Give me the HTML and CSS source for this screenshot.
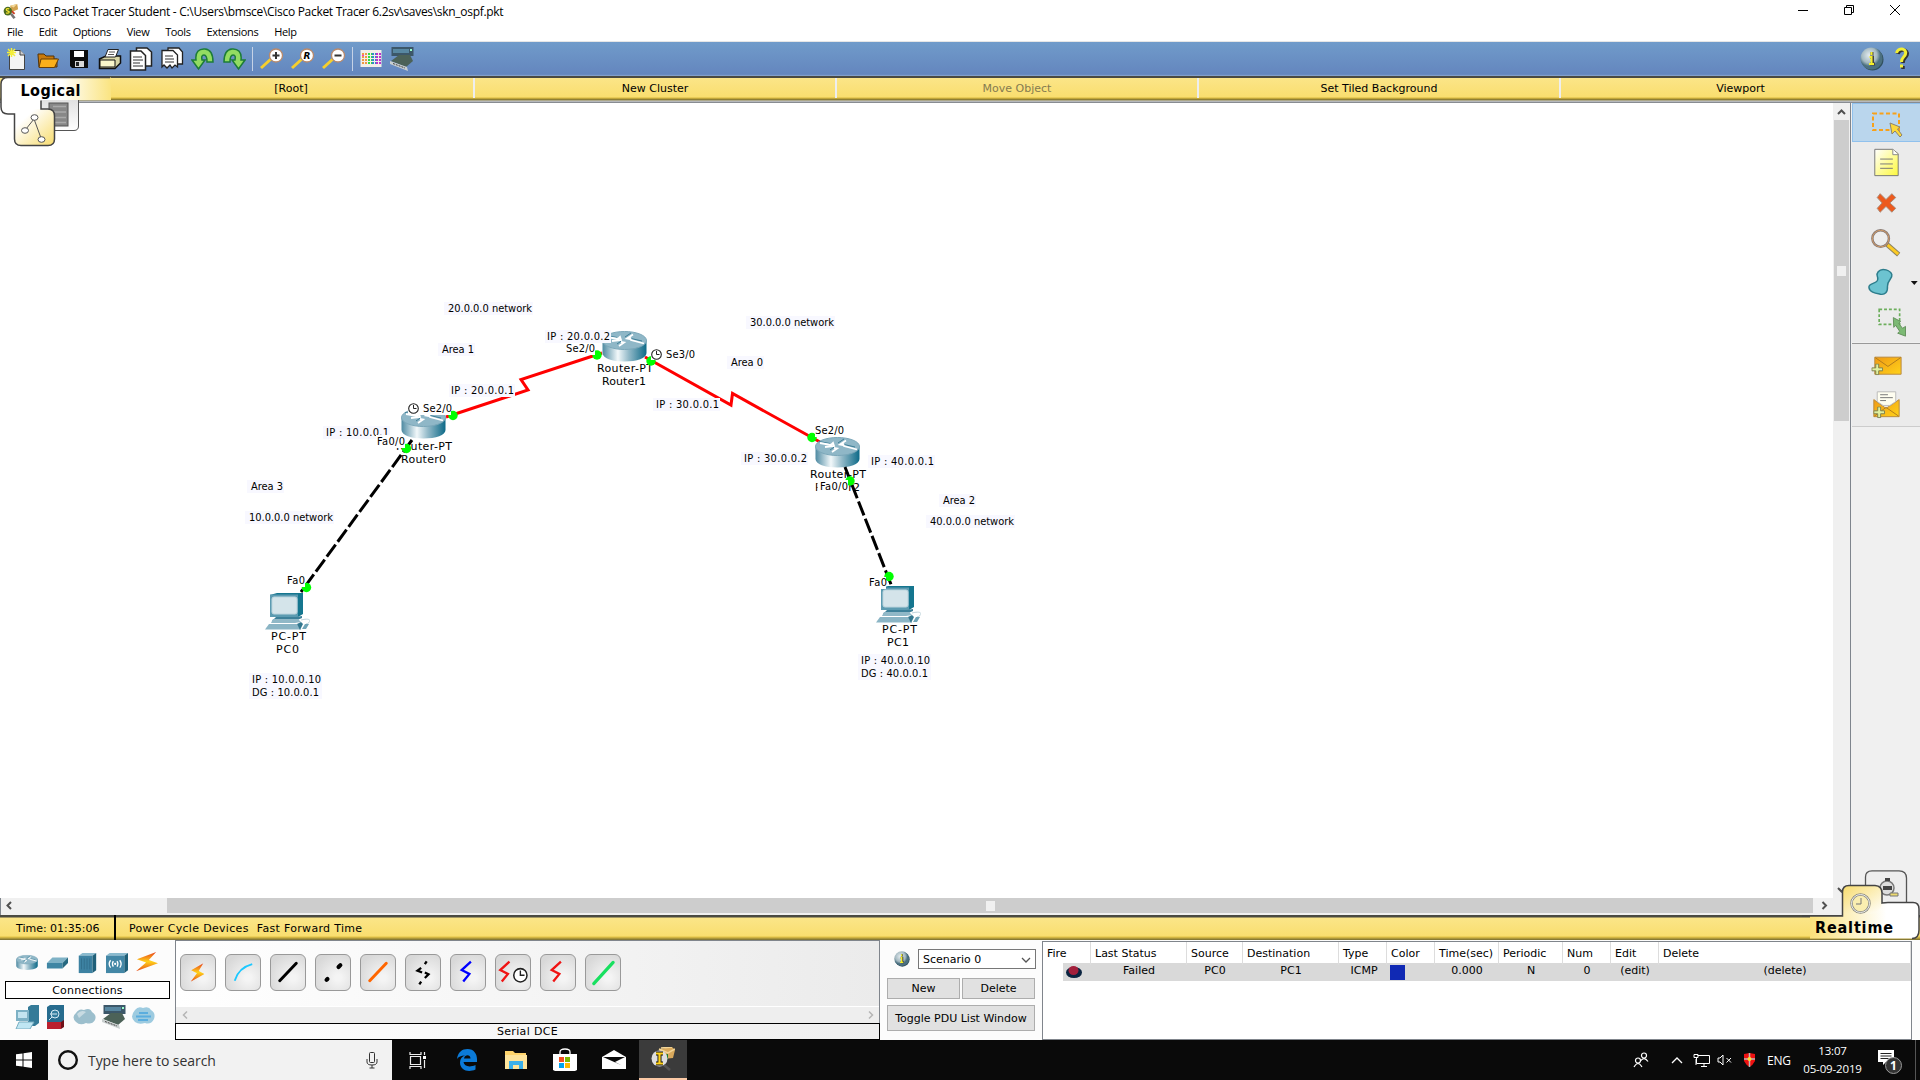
FILE: index.html
```html
<!DOCTYPE html>
<html lang="en">
<head>
<meta charset="utf-8">
<title>Cisco Packet Tracer Student</title>
<link rel="stylesheet" href="styles.css">
</head>
<body>
<svg class="defs" width="0" height="0" aria-hidden="true">
  <defs>
    <linearGradient id="metal"><stop offset="0" stop-color="#4e8aa2"/><stop offset=".35" stop-color="#f2f8fa"/><stop offset=".6" stop-color="#92b9c8"/><stop offset="1" stop-color="#0d6a88"/></linearGradient>
    <linearGradient id="hot" x1="0" y1="0" x2="0" y2="1"><stop offset="0" stop-color="#e8401c"/><stop offset=".5" stop-color="#ffd21a"/><stop offset="1" stop-color="#e84a18"/></linearGradient>
    <linearGradient id="env" x1="0" y1="0" x2="1" y2="1"><stop offset="0" stop-color="#f09a14"/><stop offset="1" stop-color="#ffd21a"/></linearGradient>
    <linearGradient id="note" x1="0" y1="0" x2="1" y2="1"><stop offset="0" stop-color="#fff"/><stop offset="1" stop-color="#fdf93c"/></linearGradient>
    <radialGradient id="orb" cx=".4" cy=".35"><stop offset="0" stop-color="#e4ecf0"/><stop offset=".7" stop-color="#a3b8c0"/><stop offset="1" stop-color="#4b7080"/></radialGradient>
    <linearGradient id="tabfade"><stop offset="0" stop-color="#fff"/><stop offset=".55" stop-color="#fff"/><stop offset="1" stop-color="#fae481"/></linearGradient>
    <linearGradient id="rtfade"><stop offset="0" stop-color="#fae17a"/><stop offset=".7" stop-color="#fff"/></linearGradient>
    <linearGradient id="iconfade" x1="0" y1="0" x2="1" y2="1"><stop offset=".25" stop-color="#fff"/><stop offset="1" stop-color="#f8dc6c"/></linearGradient>
    <linearGradient id="clockfade" x1="0" y1="0" x2="1" y2="1"><stop offset="0" stop-color="#f8dc6c"/><stop offset="1" stop-color="#fff"/></linearGradient>
    <linearGradient id="greyfade" x1="0" y1="0" x2="0" y2="1"><stop offset="0" stop-color="#ddd"/><stop offset="1" stop-color="#fff"/></linearGradient>
    <symbol id="router" viewBox="0 0 45 31">
      <path d="M.5 9V22C.5 27 10 30.500 22.500 30.500S44.500 27 44.500 22V9Z" fill="url(#metal)"/>
      <ellipse cx="22.500" cy="9.500" rx="22" ry="9" fill="#8fb7c7" stroke="#7ba7b9"/>
      <path d="M4 4.500 15 6.500M29 2 23 6M40 10 27 7M15 13 20 9.500" fill="none" stroke="#3e7f98"/>
      <path d="M5 6 16 8 18 6 19 9 10 10M31 3.500 25 7.500 28 8M42 12.500 29 9 28 6.500M17 15 22 11.500 19 11" fill="none" stroke="#fff" stroke-width="1.800"/>
    </symbol>
    <symbol id="pc" viewBox="0 0 45 37">
      <path d="M5 2 12 0H38V21L33 24H5Z" fill="#15768f"/>
      <path d="M5 1.500H33V24H5Z" fill="#5c9bb1"/>
      <rect x="7" y="4" width="25" height="17" rx="2" fill="#d4e4ea" stroke="#bcd5de"/>
      <path d="M11 24H31L37 23V25L30 28H7Z" fill="#3d8099"/>
      <path d="M8 26H33L36 29 30 30H6Z" fill="#90b8c7"/>
      <path d="M4 31H32L36 36.500H0Z" fill="#8bb5c5"/><path d="M32 31 36 29 38 31 35 37Z" fill="#34788f"/>
      <path d="M36 27C48 24 46 30 41 31" fill="none" stroke="#bdd2da"/><path d="M40 31h4l-3 5h-4Z" fill="#6fa4b7"/>
    </symbol>
    <symbol id="clk" viewBox="0 0 12 12"><circle cx="6" cy="6" r="4.800" fill="#fff" stroke="#222" stroke-width="1.100"/><path d="M6 2.500V6H9" fill="none" stroke="#222"/></symbol>
    <symbol id="bolt" viewBox="0 0 24 30"><path d="M17 2 5 13 15 18 7 28" fill="none" stroke="currentColor" stroke-width="3"/></symbol>
    <symbol id="hotbolt" viewBox="0 0 24 24" preserveAspectRatio="none"><path d="M22 0 1 9 11 13 0 24 24 14 14 10Z" fill="url(#hot)"/></symbol>
    <symbol id="lens" viewBox="0 0 24 24"><path d="M1 21 11 12" stroke="#f6cf2d" stroke-width="3"/><circle cx="16" cy="8.500" r="6.500" fill="#fff" stroke="#b98a6c" stroke-width="1.300"/></symbol>
    <symbol id="device" viewBox="0 0 24 24"><rect x="1.500" width="22" height="9" fill="#3c5769"/><path d="M3 2H19V6H3Z" fill="#5887a1"/><path d="M20 2h2v2h-2z" fill="#9fc"/><path d="M9 8H20L23 14 16 20 1 14Z" fill="#4c6258"/><path d="M0 14 17 20 18 24 0 17Z" fill="#c9cfcf"/><path d="M3 16.500l12 4.500" stroke="#444" stroke-dasharray="2 1"/></symbol>
    <symbol id="info" viewBox="0 0 24 24"><circle cx="12.500" cy="12.500" r="11" fill="#31505e"/><circle cx="11.500" cy="11.500" r="11" fill="url(#orb)"/><path d="M12 5v3M10 10h2.500v7M10 17h5" stroke="#444" stroke-width="3" fill="none"/><path d="M11.500 5v3M9.500 10h2v7M9 17h5" stroke="#f4f02a" stroke-width="2" fill="none"/></symbol>
    <symbol id="pt" viewBox="0 0 18 18"><path d="M8 2 16 0 17 6 10 9Z" fill="#d2a24e"/><path d="M8 2l8-2-4 4z" fill="#f2d898"/><circle cx="5.500" cy="8" r="4.800" fill="#4e6d20"/><path d="M7 5.500C3 4 3 7.500 5.500 8S7 11 3.500 10" fill="none" stroke="#f6e330" stroke-width="1.500"/><path d="M9 11 13 16" stroke="#777" stroke-width="3"/><path d="M10 8l3 3" stroke="#c83a22" stroke-width="2"/></symbol>
    <symbol id="plus" viewBox="0 0 12 12"><path d="M4.500.5h3v4h4v3h-4v4h-3v-4h-4v-3h4Z" fill="#dff0a0" stroke="#7d8150"/></symbol>
  </defs>
</svg>

<header class="titlebar">
  <svg class="app-icon" width="16" height="16"><use href="#pt"/></svg>
  <span class="title">Cisco Packet Tracer Student - C:\Users\bmsce\Cisco Packet Tracer 6.2sv\saves\skn_ospf.pkt</span>
  <div class="window-buttons">
    <svg width="12" height="12"><path d="M1 6.500h10" stroke="#000"/></svg>
    <svg width="12" height="12"><path d="M1.500 3.500h7v7h-7zM3.500 3.500v-2h7v7h-2" fill="none" stroke="#000"/></svg>
    <svg width="12" height="12"><path d="M1 1l10 10M11 1 1 11" stroke="#000"/></svg>
  </div>
</header>
<nav class="menu"><span>File</span><span>Edit</span><span>Options</span><span>View</span><span>Tools</span><span>Extensions</span><span>Help</span></nav>

<div class="toolbar">
  <div class="tools">
    <svg viewBox="0 0 24 24"><path d="M4.500 3.500H15L19.500 8V22.500H4.500Z" fill="#f4f4f4" stroke="#444"/><path d="M15 3v5h5" fill="#ccc" stroke="#444"/><path d="M3 2l7 7M10 2 3 9M6.500 1v9M2 5.500h9" stroke="#f4ee3a" stroke-width="1.500"/></svg>
    <svg viewBox="0 0 24 24"><path d="M2 8V7H8L10 9H18V12H21V20H3Z" fill="#c97a0c" stroke="#533308"/><path d="M5 12H22.500L18.500 20.500H3Z" fill="#fbb01c" stroke="#694008"/></svg>
    <svg viewBox="0 0 24 24"><path d="M3 3H21V21H5L3 19Z" fill="#0c0c0c"/><path d="M7 4H17V10H7Z" fill="#fff"/><path d="M8 14H17V20H8Z" fill="#d8d8d8"/><path d="M9 15h3v4H9Z" fill="#222"/></svg>
    <svg viewBox="0 0 24 24"><path d="M1.500 12 8 9H22.500V16L17 21.500H1.500Z" fill="#d8d6a6" stroke="#111" stroke-width="1.500"/><path d="M7 10 10 2.500H20.500L17.500 10Z" fill="#fff" stroke="#222"/><path d="M11 5h6M10 7.500h6" stroke="#555"/><path d="M2 13H17V20H2Z" fill="#f8f6cc" stroke="#111"/></svg>
    <svg viewBox="0 0 24 24"><g fill="#fff" stroke="#222" stroke-width="1.500"><path d="M7.500 1H18L22.500 5V19H7.500Z"/><path d="M1.500 4H12L16.500 8.500V23H1.500Z"/></g><path d="M4 10h9M4 13h10M4 16h7M4 19h10" stroke="#333"/></svg>
    <svg viewBox="0 0 24 24"><g fill="#fff" stroke="#222" stroke-width="1.300"><path d="M8 1H19L22.500 5V17H8Z"/><path d="M2 3.500H13L17.500 8V20L15 18 12 21 10 18 7 21 4 18 2 20Z"/></g><path d="M5 9h8M5 12h9M5 15h9" stroke="#333"/></svg>
    <svg viewBox="0 0 24 24"><path d="M1 13H5C4 5 8 1.500 14 2S22 7 22 15H16C16 10 15.500 8 13 8S10.500 10 11 13H14L7.500 22Z" fill="#92dc62" stroke="#1c7c38" stroke-width="1.500"/></svg>
    <svg viewBox="0 0 24 24"><path d="M23 13H19C20 5 16 1.500 10 2S2 7 2 15H8C8 10 8.500 8 11 8S13.500 10 13 13H10L16.500 22Z" fill="#92dc62" stroke="#1c7c38" stroke-width="1.500"/></svg>
    <i class="sep"></i>
    <svg viewBox="0 0 24 24"><use href="#lens"/><path d="M12.500 8.500h7M16 5v7" stroke="#333" stroke-width="2"/></svg>
    <svg viewBox="0 0 24 24"><use href="#lens"/><text x="12.500" y="12" class="lens-r">R</text></svg>
    <svg viewBox="0 0 24 24"><use href="#lens"/><path d="M12.500 8.500h7" stroke="#333" stroke-width="2"/></svg>
    <i class="sep"></i>
    <svg viewBox="0 0 24 24"><rect x="1.500" y="3" width="21" height="17" fill="#f2efe8"/><g stroke-width="2" stroke-dasharray="2 1"><path d="M3 8h3" stroke="#f3c"/><path d="M3 7h5M3 10h5M3 13h5M3 16h5" stroke="#e94"/><path d="M9 7h4M9 10h4M9 13h4M9 16h4" stroke="#3d4"/><path d="M13 7h4M13 10h4M13 13h4M13 16h4" stroke="#38c"/><path d="M17 7h5M17 10h5M17 13h5M17 16h5" stroke="#b3c"/></g></svg>
    <svg viewBox="0 0 24 24"><use href="#device"/></svg>
  </div>
  <div class="help-tools">
    <svg width="24" height="24"><use href="#info"/></svg>
    <svg width="24" height="24" viewBox="0 0 24 24"><path d="M8 7C9 1 19 2 17 8 16 11 13 11 13 16M13 19v3" fill="none" stroke="#333" stroke-width="3.500"/><path d="M6.500 6C8 0 17 1 15.500 7 15 10 11.500 10 11.500 15M11.500 17.500v3" fill="none" stroke="#f1ee35" stroke-width="3"/></svg>
  </div>
</div>

<div class="navbar">
  <span>[Root]</span><span>New Cluster</span><span class="off">Move Object</span><span>Set Tiled Background</span><span>Viewport</span>
  <svg class="logical" width="112" height="72" viewBox="0 0 112 72">
    <path d="M40.500 20H78.500V50Q78.500 54.500 74 54.500H40.500Z" fill="url(#greyfade)" stroke="#555"/>
    <rect x="49" y="27" width="19" height="23" fill="#888" stroke="#555"/><path d="M53 30.500H66M53 36H66M53 41.500H66M53 46.500H66" stroke="#aaa" stroke-width="1.500"/>
    <path d="M0 1.500H111V24H41V33H15V38H8Q1 38 1 31V8Q1 1.500 8 1.500Z" fill="url(#tabfade)"/>
    <path d="M15 33H41V33.500H48Q54.500 33.500 54.500 40V63Q54.500 69.500 48 69.500H21Q14.500 69.500 14.500 63V38Z" fill="url(#iconfade)"/>
    <path d="M110 1.500H8Q1 1.500 1 8V31Q1 38 8 38H14.500V63Q14.500 69.500 21 69.500H48Q54.500 69.500 54.500 63V40Q54.500 33 48 33H41V24.500" fill="none" stroke="#444" stroke-width="1.500"/>
    <path d="M26 53 34 43 41 62" fill="none" stroke="#555"/><g fill="#fff" stroke="#555"><ellipse cx="34.500" cy="41.500" rx="3.500" ry="2.800"/><ellipse cx="25" cy="54.500" rx="3.500" ry="2.800"/><ellipse cx="41.500" cy="63.500" rx="3.500" ry="2.800"/></g>
    <text x="20.500" y="20" class="tab-name" textLength="60">Logical</text>
  </svg>
</div>

<main class="work">
  <section class="stage">
    <svg class="diagram" viewBox="0 103 1833 795" width="1833" height="795">
      <g fill="none" stroke="#f00" stroke-width="3">
        <path d="M446 417 528 390 521 379.500 602 353"/><path d="M645 357 731 405 732.500 393.500 820 442"/>
      </g>
      <g class="notes-bg">
        <path d="M444 302h89v13h-89zM438 343h37v13h-37zM449 384h66v13h-66zM323 426h67v13h-67zM746 316h89v13h-89zM727 356h37v13h-37zM653 398h67v13h-67zM741 452h67v13h-67zM868 455h67v13h-67zM939 494h37v13h-37zM926 515h89v13h-89zM858 654h73v26h-73zM247 480h37v13h-37zM245 511h89v13h-89zM249 673h73v26h-73z"/>
      </g>
      <use href="#router" x="602" y="331" width="45" height="31"/>
      <use href="#router" x="401" y="408" width="45" height="31"/>
      <use href="#router" x="815" y="437" width="45" height="31"/>
      <path d="M545 330h66v13h-66z" fill="#f8f8ff"/>
      <g class="names">
        <text x="597" y="372" textLength="56">Router-PT</text><text x="602" y="385" textLength="44">Router1</text>
        <text x="396" y="450" textLength="56">Router-PT</text><text x="401" y="463" textLength="45">Router0</text>
        <text x="810" y="478" textLength="56">Router-PT</text><text x="815" y="491" textLength="45">Router2</text>
        <text x="882" y="633" textLength="35">PC-PT</text><text x="887" y="646" textLength="22">PC1</text>
        <text x="271" y="640" textLength="35">PC-PT</text><text x="276" y="653" textLength="23">PC0</text>
      </g>
      <g class="notes">
        <text x="448" y="312" textLength="84">20.0.0.0 network</text><text x="442" y="353" textLength="32">Area 1</text>
        <text x="547" y="340" textLength="63">IP : 20.0.0.2</text><text x="451" y="394" textLength="63">IP : 20.0.0.1</text>
        <text x="326" y="436" textLength="63">IP : 10.0.0.1</text><text x="750" y="326" textLength="84">30.0.0.0 network</text>
        <text x="731" y="366" textLength="32">Area 0</text><text x="656" y="408" textLength="63">IP : 30.0.0.1</text>
        <text x="744" y="462" textLength="63">IP : 30.0.0.2</text><text x="871" y="465" textLength="63">IP : 40.0.0.1</text>
        <text x="943" y="504" textLength="32">Area 2</text><text x="930" y="525" textLength="84">40.0.0.0 network</text>
        <text x="861" y="664" textLength="69">IP : 40.0.0.10</text><text x="861" y="677" textLength="67">DG : 40.0.0.1</text>
        <text x="251" y="490" textLength="32">Area 3</text><text x="249" y="521" textLength="84">10.0.0.0 network</text>
        <text x="252" y="683" textLength="69">IP : 10.0.0.10</text><text x="252" y="696" textLength="67">DG : 10.0.0.1</text>
      </g>
      <path d="M412 440 301 592M845 467 892 587" fill="none" stroke="#000" stroke-width="3" stroke-dasharray="15 3.500"/>
      <use href="#pc" x="265" y="593" width="45" height="37"/><use href="#pc" x="876" y="586" width="45" height="37"/>
      <g fill="#0f0"><circle cx="453" cy="415.500" r="4.700"/><circle cx="597" cy="355" r="4.700"/><circle cx="651" cy="361" r="4.700"/><circle cx="812" cy="437.500" r="4.700"/><circle cx="406.500" cy="448.500" r="4.700"/><circle cx="306.500" cy="587.500" r="4.700"/><circle cx="850" cy="481" r="4.700"/><circle cx="889" cy="576.500" r="4.700"/></g>
      <path d="M565 343h30v12h-30zM408 403h43v12h-43zM376 435h29v13h-29zM651 348h43v12h-43zM815 425h29v12h-29zM817.500 480h30.500v13h-30.500zM868 577h18v12h-18zM286 575h19v12h-19z" fill="#fff"/>
      <g class="notes">
        <text x="566" y="352" textLength="29">Se2/0</text><text x="423" y="412" textLength="29">Se2/0</text><text x="377" y="445" textLength="28">Fa0/0</text>
        <text x="666" y="358" textLength="29">Se3/0</text><text x="815" y="434" textLength="29">Se2/0</text><text x="820" y="490" textLength="28">Fa0/0</text>
        <text x="869" y="586" textLength="18">Fa0</text><text x="287" y="584" textLength="18">Fa0</text>
      </g>
      <use href="#clk" x="407.500" y="402.500" width="12" height="12"/><use href="#clk" x="650.500" y="348.500" width="12" height="12"/>
    </svg>
    <div class="vscroll">
      <svg width="16" height="17"><path d="M4 11 7.500 7.500 11 11" fill="none" stroke="#505050" stroke-width="2"/></svg>
      <div class="vthumb"><i></i></div>
      <svg class="down" width="16" height="17"><path d="M4 7 7.500 10.500 11 7" fill="none" stroke="#505050" stroke-width="2"/></svg>
    </div>
    <div class="hscroll">
      <svg width="16" height="16"><path d="M10 4 6.500 7.500 10 11" fill="none" stroke="#505050" stroke-width="2"/></svg>
      <div class="hthumb"><i></i></div>
      <svg width="21" height="16"><path d="M9.500 4 13 7.500 9.500 11" fill="none" stroke="#505050" stroke-width="2"/></svg>
    </div>
  </section>
  <aside class="side">
    <div class="tool on"><svg viewBox="0 0 68 39"><path d="M21 10.500H47V27H21Z" fill="none" stroke="#f7a11a" stroke-width="2" stroke-dasharray="4 2.500"/><path d="M38 20 48 24 45.500 26 50 32 48 34 43 28 40 31Z" fill="#fbd83a" stroke="#8b8370"/></svg></div>
    <div class="tool"><svg viewBox="0 0 68 40"><path d="M22.500 7.500H41L46.500 12V34.500H22.500Z" fill="url(#note)" stroke="#777"/><path d="M41 7.500V13H46.500" fill="#fff" stroke="#888"/><path d="M28 17.500H41M28 22.500H41M28 27H41" stroke="#777"/></svg></div>
    <div class="tool"><svg viewBox="0 0 68 40"><path d="M28 12 34 18 40 12 44 16 38 21.500 44 27 40 31 34 25 28 31 25 27 30 21.500 25 16Z" fill="#ec5a1e" stroke="#a98b78"/></svg></div>
    <div class="tool"><svg viewBox="0 0 68 40"><path d="M35 23 47 33.500" stroke="#8b8260" stroke-width="5"/><path d="M35.500 23.500 46.500 33" stroke="#fcca22" stroke-width="3"/><circle cx="28.500" cy="17" r="8.500" fill="#efefef" fill-opacity=".6" stroke="#877a75" stroke-width="2.500"/><circle cx="28.500" cy="17" r="8.500" fill="none" stroke="#d29a66"/></svg></div>
    <div class="tool"><svg viewBox="0 0 68 40"><path d="M26 10C30 5 39 9 40 13S35 19 35.500 25 33 34 28 33 17 31 16.500 26 25 23 25.500 18 23 14 26 10Z" fill="#6cc3d0" stroke="#2d7d8c" stroke-width="1.500"/><path d="M59.500 19.500h7l-3.500 4z" fill="#111"/></svg></div>
    <div class="tool"><svg viewBox="0 0 68 40"><path d="M27 7.500H48V23H27Z" fill="none" stroke="#6cae5c" stroke-width="1.700" stroke-dasharray="3 2"/><path d="M41.500 16 49 20 47 22 51 27 54 25V35L46 32 48 30 44 24 42 26Z" fill="#7cba74" stroke="#66915f"/></svg></div>
    <div class="tool split"><svg viewBox="0 0 68 40"><path d="M22.500 13.500H49.500V31H22.500Z" fill="url(#env)" stroke="#b98a40"/><path d="M23 14 36 23 49 14" fill="none" stroke="#b17b1c"/><use href="#plus" x="19" y="20" width="12" height="12"/></svg></div>
    <div class="tool"><svg viewBox="0 0 68 40"><path d="M21.500 16 34 25 47.500 16V33.500H21.500Z" fill="url(#env)" stroke="#b98a40"/><path d="M25 8H44V18L38 22H31L25 18Z" fill="#fffef0" stroke="#bbb"/><path d="M28 11h8M28 14h13M28 17h6" stroke="#777"/><path d="M22 33 34 24 47 33" fill="none" stroke="#b17b1c"/><use href="#plus" x="21" y="23" width="12" height="12"/></svg></div>
  </aside>
</main>

<div class="timebar">
  <span class="time">Time: 01:35:06</span><span class="links"><span class="power">Power Cycle Devices</span><span class="fast">Fast Forward Time</span></span>
  <svg class="realtime" width="118" height="70" viewBox="1802 870 118 70">
    <path d="M1865.500 905V877Q1865.500 870.800 1872 870.800H1899Q1906.500 871 1906.500 878V905Z" fill="#eee" stroke="#555" stroke-width="1.300"/>
    <circle cx="1887" cy="888" r="7" fill="#ddd" stroke="#777" stroke-width="1.500"/><path d="M1885 878h5v3h-5zM1883 886h9v4h-9z" fill="#444"/><path d="M1890 893h8v3h-8z" fill="#eedb70" stroke="#777"/>
    <path d="M1810 916H1842.500V892Q1842.500 885.500 1849 885.500H1875Q1882 886 1882 893V903Q1885 902.500 1888 902.500H1913Q1919 902.500 1919 909V930Q1919 938.500 1912 938.500H1810Z" fill="url(#rtfade)"/>
    <path d="M1842.500 912V892Q1842.500 885.500 1849 885.500H1875Q1882 886 1882 893V904Q1880 912 1870 914H1842.500Z" fill="url(#clockfade)"/>
    <path d="M1802 916H1842.500V892Q1842.500 885.500 1849 885.500H1875Q1882 886 1882 893V903Q1885 902.500 1888 902.500H1913Q1919 902.500 1919 909V930Q1919 938.500 1912 938.500" fill="none" stroke="#444" stroke-width="1.500"/>
    <circle cx="1860.500" cy="903.500" r="9" fill="#faeeb0" stroke="#8c8c80" stroke-width="2.500"/><circle cx="1860.500" cy="903.500" r="9" fill="none" stroke="#eee"/><path d="M1861 898v6h-5" fill="none" stroke="#777"/>
    <text x="1815" y="932.500" class="tab-name" textLength="78">Realtime</text>
  </svg>
</div>

<section class="bottom">
  <div class="kinds">
    <div class="kind-row">
      <svg viewBox="0 0 24 24"><use href="#router" x="0" y="3" width="24" height="17"/></svg>
      <svg viewBox="0 0 24 24"><path d="M1 12 7 6H24L18 12Z" fill="#7fb2c6"/><path d="M1 12H18V18H1Z" fill="#3f86a4"/><path d="M18 12 24 6V12L18 18Z" fill="#256880"/></svg>
      <svg viewBox="0 0 24 24"><path d="M3 4 7 1H22L18 4Z" fill="#8abace"/><path d="M3 4H18V23H3Z" fill="#3d82a2"/><path d="M18 4 22 1V20L18 23Z" fill="#1f6079"/><path d="M6 7v12M9 7v12M12 7v12M15 7v12" stroke="#306f8c"/></svg>
      <svg viewBox="0 0 24 24"><path d="M0 4 4 1H24L20 4Z" fill="#8abace"/><path d="M0 4H20V23H0Z" fill="#4387a6"/><path d="M20 4 24 1V20L20 23Z" fill="#1f6079"/><path d="M5 9Q2 13 5 17M8 10Q6 13 8 16M12 10Q14 13 12 16M15 9Q18 13 15 17" fill="none" stroke="#fff" stroke-width="1.400"/><circle cx="10" cy="13" r="1.200" fill="#fff"/></svg>
      <svg viewBox="0 0 24 24"><use href="#hotbolt" width="24" height="21"/></svg>
    </div>
    <div class="kind-name">Connections</div>
    <div class="kind-row low">
      <svg viewBox="0 0 24 24"><path d="M13 2 16 0H24V18L20 21H13Z" fill="#347b98"/><path d="M1 5H14V16H1Z" fill="#7db1c5"/><path d="M3 7h9v6H3Z" fill="#c4e4f0"/><path d="M4 17H19L15 24H1Z" fill="#bfe6f3" stroke="#78adc0"/></svg>
      <svg viewBox="0 0 24 24"><path d="M3 2 6 0H20V20L17 23H3Z" fill="#276c8e"/><path d="M3 17H17V24H3Z" fill="#ba202e"/><path d="M17 17l3-2v7l-3 2z" fill="#701018"/><circle cx="11" cy="9" r="4" fill="#357d9d" stroke="#d7eaf2"/><path d="M8 12 5 15M6 9h7" stroke="#d7eaf2"/></svg>
      <svg viewBox="0 0 24 24"><path d="M3 8Q6 3 11 5 17 2 19 7 24 10 22 15 19 20 13 18 7 21 3 17-2 12 3 8" fill="#9cbfcd"/><path d="M4 9q4-5 9-2l-7 6z" fill="#c8dbe2"/></svg>
      <svg viewBox="0 0 24 24"><use href="#device"/></svg>
      <svg viewBox="0 0 24 24"><path d="M4 5Q7 1 12 3 18 1 20 5 25 8 23 14 20 20 14 18 8 20 4 17-2 12 4 5" fill="#9dcbe0"/><path d="M8 8H17M5 11.500H20M7 15H17" stroke="#5badde" stroke-width="1.800"/></svg>
    </div>
  </div>

  <div class="cables">
    <div class="cable-row">
      <div class="cable"><svg viewBox="0 0 36 38"><use href="#hotbolt" x="10" y="9" width="15" height="20"/></svg></div>
      <div class="cable"><svg viewBox="0 0 36 38"><path d="M9 28Q13 14 28 10" fill="none" stroke="#1cc8ff" stroke-width="2"/></svg></div>
      <div class="cable"><svg viewBox="0 0 36 38"><path d="M9 28 27 9" stroke="#000" stroke-width="3.200" stroke-linecap="round"/></svg></div>
      <div class="cable"><svg viewBox="0 0 36 38"><path d="M11 27 12 26M24 13 26 11" stroke="#000" stroke-width="4.500" stroke-linecap="round"/></svg></div>
      <div class="cable"><svg viewBox="0 0 36 38"><path d="M9 28 27 9" stroke="#f60" stroke-width="3.200" stroke-linecap="round"/></svg></div>
      <div class="cable"><svg viewBox="0 0 36 38"><path d="M22 7l-2 3M16 14l-4 3 5 2M20 19l4 2-4 4M16 29l-2 3" fill="none" stroke="#000" stroke-width="2.500"/></svg></div>
      <div class="cable blue"><svg viewBox="0 0 36 38"><use href="#bolt" x="7" y="4" width="20" height="28"/></svg></div>
      <div class="cable red"><svg viewBox="0 0 36 38"><use href="#bolt" x="0" y="4" width="20" height="28"/><use href="#clk" x="17" y="13" width="18" height="18"/></svg></div>
      <div class="cable red"><svg viewBox="0 0 36 38"><use href="#bolt" x="7" y="4" width="20" height="28"/></svg></div>
      <div class="cable"><svg viewBox="0 0 36 38"><path d="M8 31 29 8" stroke="#18e060" stroke-width="3.500" stroke-linecap="round"/></svg></div>
    </div>
    <div class="cable-scroll"><svg width="16" height="16"><path d="M11 4.500 7.500 8 11 11.500" fill="none" stroke="#b5b5b5" stroke-width="1.500"/></svg><svg width="16" height="16"><path d="M6 4.500 9.500 8 6 11.500" fill="none" stroke="#b5b5b5" stroke-width="1.500"/></svg></div>
    <div class="cable-name">Serial DCE</div>
  </div>

  <div class="scenario">
    <div class="pick"><svg width="16" height="16" viewBox="0 0 24 24"><use href="#info"/></svg><div class="combo"><span>Scenario 0</span><svg width="12" height="10"><path d="M2 3 6 7 10 3" fill="none" stroke="#555" stroke-width="1.300"/></svg></div></div>
    <div class="pair"><div class="btn">New</div><div class="btn">Delete</div></div>
    <div class="btn tall">Toggle PDU List Window</div>
  </div>

  <div class="pdu">
    <div class="cols head"><span>Fire</span><span>Last Status</span><span>Source</span><span>Destination</span><span>Type</span><span>Color</span><span>Time(sec)</span><span>Periodic</span><span>Num</span><span>Edit</span><span>Delete</span></div>
    <div class="cols row"><span class="fire"><svg width="16" height="14"><ellipse cx="8" cy="7.500" rx="8" ry="5.500" fill="#0b2440"/><ellipse cx="7.500" cy="5.500" rx="5" ry="4.500" fill="#a3203c"/></svg></span><span>Failed</span><span>PC0</span><span>PC1</span><span class="type">ICMP</span><span class="swatch"><i></i></span><span>0.000</span><span>N</span><span>0</span><span>(edit)</span><span>(delete)</span></div>
  </div>
</section>

<footer class="taskbar">
  <div class="start"><svg width="16" height="16"><path d="M0 2.300 6.500 1.400V7.500H0ZM7.500 1.200 16 0V7.500H7.500ZM0 8.500H6.500V14.600L0 13.700ZM7.500 8.500H16V16L7.500 14.800Z" fill="#fff"/></svg></div>
  <div class="search"><svg width="22" height="22"><circle cx="11" cy="11" r="8.800" fill="none" stroke="#111" stroke-width="2.400"/></svg><span>Type here to search</span><svg class="mic" width="12" height="18"><rect x="3.500" y="1.500" width="5" height="10" rx="1" fill="none" stroke="#333"/><path d="M1 8v3Q1 14 6 14T11 11V8M6 14v3M3.500 17h5" fill="none" stroke="#333"/></svg></div>
  <div class="apps">
    <div><svg width="18" height="18"><path d="M1.500 5.500h10v8h-10zM1 1v2.500h11V1M1 18v-2.500h11V18M15.500 1v3M15.500 9v8" fill="none" stroke="#eee" stroke-width="1.200"/><path d="M14 5h3v3h-3z" fill="#fff"/></svg></div>
    <div><svg width="20" height="22" viewBox="0 0 20 22"><path d="M0 10C1 3 5 0 10.500 0 17 0 20 5 20 10V13H6.500C7 17 12 19 18.500 16V20.500C11 24 3 21 3 13.500 3 10 5 7.500 8 6.500 4 6.500 1.500 8 0 10ZM7 9.500H13.500C13.500 5.500 8 5 7 9.500Z" fill="#0b7ad8"/></svg></div>
    <div><svg width="22" height="20"><path d="M0 1H8L10 3H21V19H0Z" fill="#ffd46b"/><path d="M0 5H22V19H0Z" fill="#fee49b"/><path d="M4 19V11H18V19H14V15H8V19Z" fill="#3bb0ea"/></svg></div>
    <div><svg width="24" height="24"><path d="M7 6V4Q7 1 12 1T17 4V6" fill="none" stroke="#fff" stroke-width="1.300"/><path d="M0 6H24V22L22 23H2L0 22Z" fill="#fff"/><path d="M6 9h5v5H6z" fill="#f25022"/><path d="M12 9h5v5h-5z" fill="#7fba00"/><path d="M6 15h5v5H6z" fill="#00a4ef"/><path d="M12 15h5v5h-5z" fill="#ffb900"/></svg></div>
    <div><svg width="24" height="20"><path d="M0 7 12 0 24 7V19H0Z" fill="#fff"/><path d="M1 7H23L13 12 20 15.500Z" fill="#0a0a0a"/></svg></div>
    <div class="current"><svg width="24" height="24"><path d="M8 2 21 0 24 3 22 11 12 12Z" fill="#d9a95c"/><path d="M8 2 17 6 24 2M10 1 21 0" fill="none" stroke="#f3d698" stroke-width="1.500"/><path d="M10 8l7-1v5l-3 3z" fill="#1e7a2c"/><circle cx="8.500" cy="11.500" r="8" fill="#dedede"/><path d="M13 18 19 23" stroke="#555" stroke-width="2.500"/><path d="M5 6.500h7M8.500 6.500v10M5 16.500h7" stroke="#111" stroke-width="4"/><path d="M5 6.500h7M8.500 6.500v10M5 16.500h7" stroke="#ffd21a" stroke-width="2.200"/></svg></div>
  </div>
  <div class="tray">
    <svg class="people" width="16" height="16"><g fill="none" stroke="#fff" stroke-width="1.200"><circle cx="11" cy="3.500" r="2.500"/><path d="M7.500 9Q11 4 15 9.500"/><circle cx="5" cy="8.500" r="2.500"/><path d="M1 15Q5 8 9 15"/></g></svg>
    <svg class="chev" width="12" height="8"><path d="M1 7 6 2 11 7" fill="none" stroke="#fff" stroke-width="1.300"/></svg>
    <svg class="net" width="17" height="14"><path d="M4.500 2.500H16.500V10.500H3.500V5M8 13.500h6M11 11v2M3 6v6M1 1.500h4v3H1z" fill="none" stroke="#fff"/></svg>
    <svg class="vol" width="15" height="14"><path d="M1 5h2l3-3v10L3 9H1zM9.500 5l4.500 4.500M14 5 9.500 9.500" fill="none" stroke="#fff"/></svg>
    <svg class="shield" width="11" height="14"><path d="M0 1 5.500 0 11 1V8Q9 12 5.500 14 2 12 0 8Z" fill="#e11"/><path d="M5.500 0V14M0 6H11" stroke="#bbb" stroke-width="1.500"/><circle cx="5.500" cy="6" r="2" fill="#fd3"/></svg>
    <span class="lang">ENG</span>
    <div class="clock"><span>13:07</span><span>05-09-2019</span></div>
    <svg class="action" width="26" height="26"><path d="M0 1H16V13H8L5 16V13H0Z" fill="#fff"/><path d="M2.500 4.500h11M2.500 7h11M2.500 9.500h8" stroke="#222"/><circle cx="15.500" cy="16.500" r="8" fill="#333" stroke="#999"/><text x="12" y="21" class="badge">1</text></svg>
    <i class="peek"></i>
  </div>
</footer>
</body>
</html>
```
FILE: styles.css
```css
* { box-sizing: border-box; }
body { margin: 0; width: 1920px; height: 1080px; overflow: hidden; display: flex; flex-direction: column; background: #fff; color: #000; font: 11px "DejaVu Sans", Verdana, sans-serif; white-space: nowrap; }
svg { display: block; flex: none; }
.defs { position: absolute; }

.titlebar { height: 23px; display: flex; align-items: center; padding-left: 3px; font: 12px "Open Sans", "Segoe UI", sans-serif; }
.title { letter-spacing: -.3px; }
.app-icon { margin-right: 4px; }
.window-buttons { margin-left: auto; display: flex; gap: 34px; padding: 0 19px 3px 0; }
.menu { height: 18px; display: flex; padding-left: 7px; gap: 15.800px; font: 11px/18px "Open Sans", "Segoe UI", sans-serif; letter-spacing: -.35px; }

.toolbar { height: 35px; border-top: 1px solid #e6e6e6; padding: 5px 6px 0 5px; background: linear-gradient(#709bca, #6486be 95%, #8fa9cf); display: flex; justify-content: space-between; }
.tools { display: flex; gap: 7px; }
.tools svg { width: 24px; height: 24px; }
.sep { width: 1px; height: 24px; background: #c5d2e6; margin: 0 -.500px 0 -1px; }
.lens-r { font: bold italic 9px "DejaVu Sans", sans-serif; }
.help-tools { display: flex; gap: 6px; }

.navbar { height: 27px; position: relative; z-index: 2; padding-left: 113px; display: grid; grid-template-columns: repeat(4, 362px) 1fr; background: linear-gradient(#4a4a42 2px, #fbe588 2px, #f9de6f 21px, #d9b93e 22px, #756b30 24px, #e5e5e5 25px, #888c92 26px); text-align: center; }
.navbar span { border-right: 2px solid #eee; height: 20px; margin-top: 2px; line-height: 21px; }
.navbar span:nth-of-type(1) { padding-right: 4px; }
.navbar span:nth-of-type(5) { border: 0; line-height: 22px; }
.navbar .off { color: #857b50; }
.logical { position: absolute; left: 0; top: 0; }
.tab-name { font: bold 16px "DejaVu Sans Condensed", Tahoma, sans-serif; }

.work { flex: none; height: 812px; display: flex; background: #f0f0f0; }
.stage { width: 1851px; display: grid; grid-template: 795px 17px / 1833px 16px; border-left: 1px solid #7f858d; border-right: 1px solid #7f858d; background: #f0f0f0; }
.diagram { background: #fff; margin-left: -1px; }
.names { font: 11px "DejaVu Sans", Verdana, sans-serif; }
.notes { font: 11px "DejaVu Sans Condensed", Tahoma, sans-serif; }
.notes-bg { fill: #f8f8ff; }
.vscroll { display: flex; flex-direction: column; }
.vthumb { height: 301px; width: 15px; background: #cdcdcd; display: grid; place-items: center; }
.vthumb i, .hthumb i { width: 9px; height: 10px; background: #f0f0f0; }
.down { margin-top: auto; }
.hscroll { grid-column: 1 / 3; height: 16px; display: flex; }
.hthumb { width: 1646px; height: 15px; margin: 0 0 0 150px; background: #cdcdcd; display: grid; place-items: center; }
.side { flex: 1; background: #f0f0f0; padding-left: 1px; }
.tool { height: 40px; background: #ebebeb; }
.tool svg { width: 68px; height: 39px; }
.tool.on { height: 39px; background: #bad6ed; border: 1px solid #90c1ed; border-right: 0; }
.tool.on svg { margin: -1px; }
.tool.split { border-top: 1px solid #999; height: 41px; margin-top: 1px; }
.tool:last-child { border-bottom: 1px solid #ccc; height: 43px; }

.timebar { height: 25px; position: relative; z-index: 2; display: flex; align-items: center; background: linear-gradient(#4a4a42 2px, #fbe588 3px, #f9de6f 21px, #e3c345 22px, #756b30 25px); line-height: 27px; }
.time { width: 116px; height: 25px; padding-left: 16px; border-right: 2px solid #000; }
.links { height: 25px; padding-left: 13px; display: flex; gap: 8px; letter-spacing: .320px; }
.realtime { position: absolute; right: 0; bottom: 0; }

.bottom { flex: none; height: 100px; display: flex; background: #fcfcfc; }
.kinds { width: 175px; padding: 12px 5px 0; }
.kind-row { display: flex; gap: 6px; padding-left: 10px; height: 29px; }
.kind-row svg { width: 24px; height: 22px; }
.kind-row.low { padding-top: 6px; gap: 5px; }
.kind-row.low svg { height: 24px; }
.kind-name { height: 18px; border: 1px solid #000; background: #fff; text-align: center; line-height: 17px; letter-spacing: .250px; }
.cables { width: 705px; border: 1px solid #80858c; border-bottom: 0; background: linear-gradient(90deg, #fff, #ebebeb); display: flex; flex-direction: column; }
.cable-row { height: 67px; padding: 13px 4px; display: flex; gap: 9px; }
.cable { width: 36px; height: 37px; border: 1px solid #999; border-radius: 6px; background: radial-gradient(circle at 65% 65%, #f4f4f4 10%, #d8d8d8 80%); }
.cable svg { width: 34px; height: 35px; }
.blue { color: #00f; }
.red { color: #f01414; }
.cable-scroll { height: 17px; border-top: 1px solid #fff; background: #eee; display: flex; justify-content: space-between; }
.cable-name { flex: 1; margin: 0 -1px; border: 1px solid #000; background: linear-gradient(90deg, #fff, #eee); text-align: center; line-height: 15px; letter-spacing: .350px; }
.scenario { width: 162px; padding: 9px 6px 0 7px; }
.pick { display: flex; align-items: center; gap: 8px; padding-left: 7px; height: 20px; }
.combo { flex: 1; height: 20px; line-height: 20px; border: 1px solid #777; background: #fff; display: flex; align-items: center; justify-content: space-between; padding: 1px 3px 0 4px; }
.pair { display: flex; gap: 2px; margin: 9px 0 6px; padding-right: 1px; }
.btn { flex: 1; height: 21px; line-height: 20px; margin-right: 1px; background: #e1e1e1; border: 1px solid #adadad; text-align: center; }
.pair .btn { margin: 0; }
.tall { height: 26px; line-height: 25px; }
.pdu { width: 870px; height: 99px; margin-top: 1px; border: 1px solid #80858c; background: #fff; }
.cols { display: grid; grid-template-columns: 48px 96px 56px 96px 48px 48px 64px 64px 48px 48px 1fr; }
.head { height: 21px; line-height: 23px; }
.head span { border-right: 1px solid #ddd; padding-left: 4px; }
.row { height: 18px; line-height: 15px; background: #d9d9d9; text-align: center; margin-left: 20px; grid-template-columns: 28px 96px 56px 96px 48px 48px 64px 64px 48px 48px 1fr; }
.type { padding-left: 2px; }
.fire { display: grid; justify-content: start; padding: 2px 0 0 3px; }
.swatch i { display: block; width: 15px; height: 15px; margin: 2px 0 0 3px; background: #1029b4; }

.taskbar { flex: none; height: 40px; background: #0a0a0a; color: #fff; display: flex; font: 12px "Open Sans", "Segoe UI", sans-serif; }
.start { width: 48px; display: grid; place-items: center; }
.search { width: 344px; background: #f2f2f2; color: #333; display: flex; align-items: center; padding: 0 14px 0 9px; font-size: 14px; }
.search span { margin-left: 9px; letter-spacing: -.050px; }
.mic { margin-left: auto; }
.apps { display: flex; padding-left: 1px; }
.apps div { width: 49.200px; display: grid; place-items: center; }
.apps .current { width: 48px; background: #3b3b3b; border-bottom: 2px solid #fbc9a5; }
.tray { margin-left: auto; display: flex; align-items: center; }
.people { margin-right: 22px; }
.chev { margin-right: 10px; }
.net { margin-right: 7px; }
.vol { margin-right: 12px; }
.shield { margin-right: 12px; }
.lang { width: 24px; letter-spacing: -.200px; }
.clock { width: 83px; text-align: center; display: flex; flex-direction: column; line-height: 18px; font-size: 11.500px; letter-spacing: -.150px; }
.action { margin: 3px 11px 0 4px; }
.badge { font: bold 12px "Open Sans", sans-serif; fill: #fff; }
.peek { width: 5px; height: 40px; border-left: 1px solid #555; }
```
